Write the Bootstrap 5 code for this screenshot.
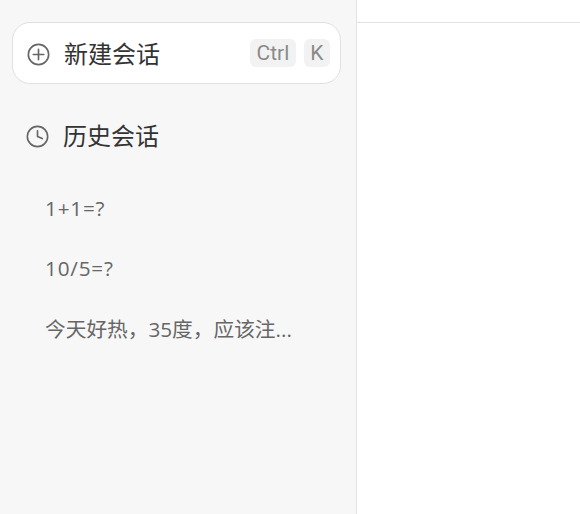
<!DOCTYPE html>
<html lang="zh-CN">
<head>
    <meta charset="UTF-8">
    <meta name="viewport" content="width=device-width, initial-scale=1.0">
    <title>会话</title>
    <link rel="stylesheet" href="https://cdn.jsdelivr.net/npm/bootstrap@5.3.0/dist/css/bootstrap.min.css">
    <style>
        html, body {
            height: 100%;
            overflow: hidden;
        }
        body {
            font-family: "Open Sans", "Noto Sans CJK SC", sans-serif;
            background: #fff;
        }
        .side-panel {
            width: 357px;
            height: 100vh;
            background: #f7f7f7;
            border-right: 1px solid #e3e3e3;
            padding: 22px 15px 0 12px;
        }
        .new-chat {
            height: 62px;
            background: #fff;
            border: 1px solid #e0e0e0;
            border-radius: 18px;
            padding: 2px 10px 0 14px;
            font-size: 24px;
            color: #333;
        }
        .new-chat svg, .history-title svg {
            width: 23px;
            height: 23px;
            margin-right: 14px;
            flex-shrink: 0;
        }
        .history-title svg {
            margin-top: 2px;
        }
        .key-group {
            margin-top: -2px;
        }
        .key-cap {
            background: #f2f2f2;
            color: #8a8a8a;
            border-radius: 6px;
            height: 28px;
            padding: 0 6.5px;
            font-family: Roboto, sans-serif;
            font-size: 21px;
            line-height: 29px;
        }
        .history-title {
            margin-top: 25px;
            height: 53px;
            padding-left: 14px;
            font-size: 24px;
            color: #333;
        }
        .history-list {
            margin-top: 16px;
        }
        .history-item {
            height: 60.5px;
            padding-left: 33px;
            font-size: 20.7px;
            color: #666;
        }
        .math-item {
            letter-spacing: .8px;
        }
        .top-rule {
            height: 23px;
            border-bottom: 1px solid #e3e3e3;
        }
    </style>
</head>
<body>
    <div class="d-flex">
        <div class="side-panel">
            <div class="new-chat d-flex align-items-center">
                <svg viewBox="0 0 24 24" fill="none" stroke="#666" stroke-width="1.7">
                    <circle cx="12" cy="12" r="10.6"/>
                    <path d="M12 6.5v11M6.5 12h11" stroke-linecap="round"/>
                </svg>
                <span>新建会话</span>
                <div class="key-group ms-auto d-flex gap-2">
                    <span class="key-cap">Ctrl</span>
                    <span class="key-cap">K</span>
                </div>
            </div>
            <div class="history-title d-flex align-items-center">
                <svg viewBox="0 0 24 24" fill="none" stroke="#666" stroke-width="1.7">
                    <circle cx="12" cy="12" r="10.6"/>
                    <path d="M12 6V12l5 2.2" stroke-linecap="round" stroke-linejoin="round"/>
                </svg>
                <span>历史会话</span>
            </div>
            <div class="history-list">
                <div class="history-item math-item d-flex align-items-center">1+1=?</div>
                <div class="history-item math-item d-flex align-items-center">10/5=?</div>
                <div class="history-item d-flex align-items-center">今天好热，35度，应该注...</div>
            </div>
        </div>
        <div class="flex-grow-1">
            <div class="top-rule"></div>
        </div>
    </div>
</body>
</html>
